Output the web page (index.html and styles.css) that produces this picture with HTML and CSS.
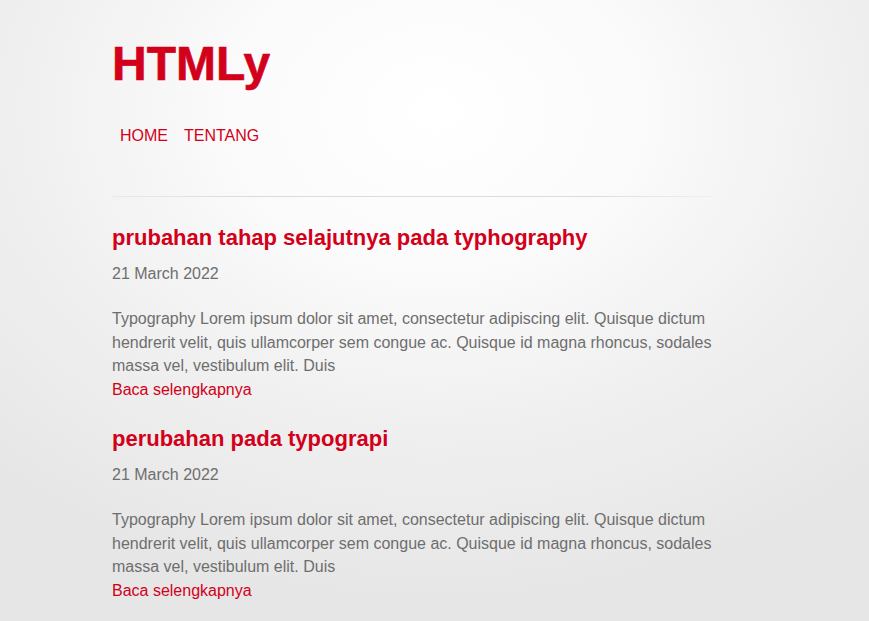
FILE: index.html
```html
<!DOCTYPE html>
<html lang="id">
<head>
<meta charset="utf-8">
<title>HTMLy</title>
<link rel="stylesheet" href="styles.css">
</head>
<body>
<div class="wrap">
  <header class="header">
    <h1 class="logo"><a href="#">HTMLy</a></h1>
    <nav class="nav">
      <a href="#">HOME</a>
      <a href="#">TENTANG</a>
    </nav>
  </header>
  <hr class="sep">
  <main class="posts">
    <article class="post">
      <h2 class="post-title"><a href="#">prubahan tahap selajutnya pada typhography</a></h2>
      <div class="date">21 March 2022</div>
      <p class="teaser">Typography Lorem ipsum dolor sit amet, consectetur adipiscing elit. Quisque dictum hendrerit velit, quis ullamcorper sem congue ac. Quisque id magna rhoncus, sodales massa vel, vestibulum elit. Duis</p>
      <a class="more" href="#">Baca selengkapnya</a>
    </article>
    <article class="post">
      <h2 class="post-title"><a href="#">perubahan pada typograpi</a></h2>
      <div class="date">21 March 2022</div>
      <p class="teaser">Typography Lorem ipsum dolor sit amet, consectetur adipiscing elit. Quisque dictum hendrerit velit, quis ullamcorper sem congue ac. Quisque id magna rhoncus, sodales massa vel, vestibulum elit. Duis</p>
      <a class="more" href="#">Baca selengkapnya</a>
    </article>
  </main>
</div>
</body>
</html>
```

FILE: styles.css
```css
html, body {
  margin: 0;
  padding: 0;
  height: 100%;
}
body {
  font-family: "Liberation Sans", Arial, sans-serif;
  font-size: 16px;
  line-height: 24px;
  color: #6e6e6e;
  background: radial-gradient(ellipse 75% 80% at 50% 18%, #ffffff 0%, #fbfbfb 30%, #f0f0f0 62%, #e6e6e6 100%) fixed;
  overflow: hidden;
}
a {
  color: #d2001a;
  text-decoration: none;
}
.wrap {
  width: 600px;
  margin: 0 0 0 112px;
  padding-top: 36px;
}
.logo {
  margin: 0;
  font-size: 48px;
  line-height: 55px;
  font-weight: 700;
  -webkit-text-stroke: 0.6px #d2001a;
}
.nav {
  display: flex;
  margin-top: 33px;
  height: 24px;
}
.nav a {
  padding: 0 8px;
  font-size: 16px;
  line-height: 24px;
}
.sep {
  margin: 48px 0 0 0;
  border: 0;
  height: 1px;
  background: linear-gradient(to right, rgba(210,210,210,0.3), #dcdcdc 20%, #dcdcdc 80%, rgba(210,210,210,0.2));
}
.posts {
  padding-top: 28px;
}
.post {
  margin-bottom: 24px;
}
.post-title {
  margin: 0;
  font-size: 22px;
  line-height: 26px;
  font-weight: 700;
}
.date {
  margin-top: 11px;
  line-height: 24px;
}
.teaser {
  margin: 21px 0 0 0;
  line-height: 23.7px;
}
.more {
  display: block;
  line-height: 23.7px;
}
```
